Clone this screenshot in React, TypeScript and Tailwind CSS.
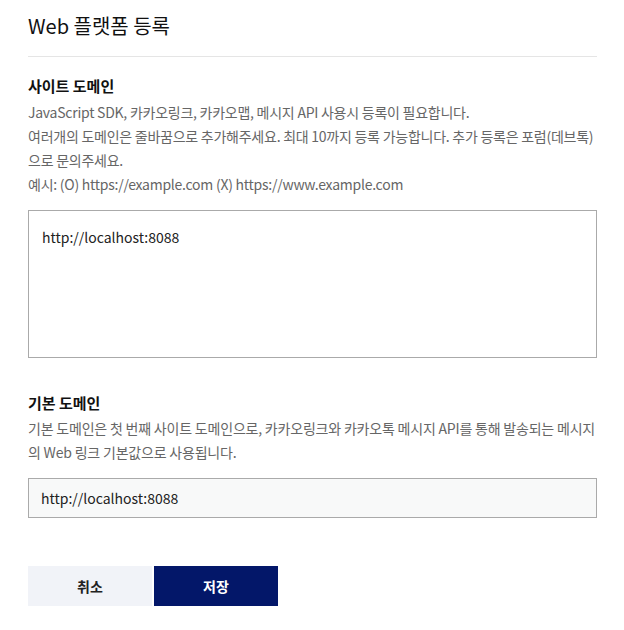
export default function App() {
  const font = { fontFamily: '"Noto Sans CJK KR", "Noto Sans", sans-serif' };
  return (
    <div style={font} className="w-[624px] h-[630px] bg-white pl-[28px] pr-[27px] pt-[11px] text-[#222]">
      <h1 className="text-[20px] leading-[30px] font-normal text-[#111]">Web 플랫폼 등록</h1>
      <div className="mt-[15px] h-px bg-[#e5e5e5]" />

      <section className="mt-[17px]">
        <h2 className="text-[15px] leading-[24px] font-bold text-[#111]">사이트 도메인</h2>
        <div className="mt-[2px] text-[14px] leading-[24px] text-[#666] tracking-[-0.25px]">
          <p>JavaScript SDK, 카카오링크, 카카오맵, 메시지 API 사용시 등록이 필요합니다.</p>
          <p>여러개의 도메인은 줄바꿈으로 추가해주세요. 최대 10까지 등록 가능합니다. 추가 등록은 포럼(데브톡)으로 문의주세요.</p>
          <p>예시: (O) https://example.com (X) https://www.example.com</p>
        </div>
        <textarea
          defaultValue="http://localhost:8088"
          spellCheck={false}
          style={font}
          className="mt-[14px] block w-full h-[148px] resize-none border border-[#aaa] px-[13px] py-[14px] text-[14px] leading-[24px] text-[#222] outline-none"
        />
      </section>

      <section className="mt-[33px]">
        <h2 className="text-[15px] leading-[24px] font-bold text-[#111]">기본 도메인</h2>
        <div className="mt-[1px] text-[14px] leading-[24px] text-[#666] tracking-[-0.2px]">
          <p>기본 도메인은 첫 번째 사이트 도메인으로, 카카오링크와 카카오톡 메시지 API를 통해 발송되는 메시지의 Web 링크 기본값으로 사용됩니다.</p>
        </div>
        <input
          defaultValue="http://localhost:8088"
          style={font}
          className="mt-[14px] block w-full h-[40px] border border-[#aaa] bg-[#f8f9f9] px-[12px] text-[14px] text-[#222] outline-none"
        />
      </section>

      <div className="mt-[48px] flex gap-[2px]">
        <button className="w-[124px] h-[40px] bg-[#f1f3f8] text-[14px] font-bold text-[#222]">취소</button>
        <button className="w-[124px] h-[40px] bg-[#031769] text-[14px] font-bold text-white">저장</button>
      </div>
    </div>
  );
}
